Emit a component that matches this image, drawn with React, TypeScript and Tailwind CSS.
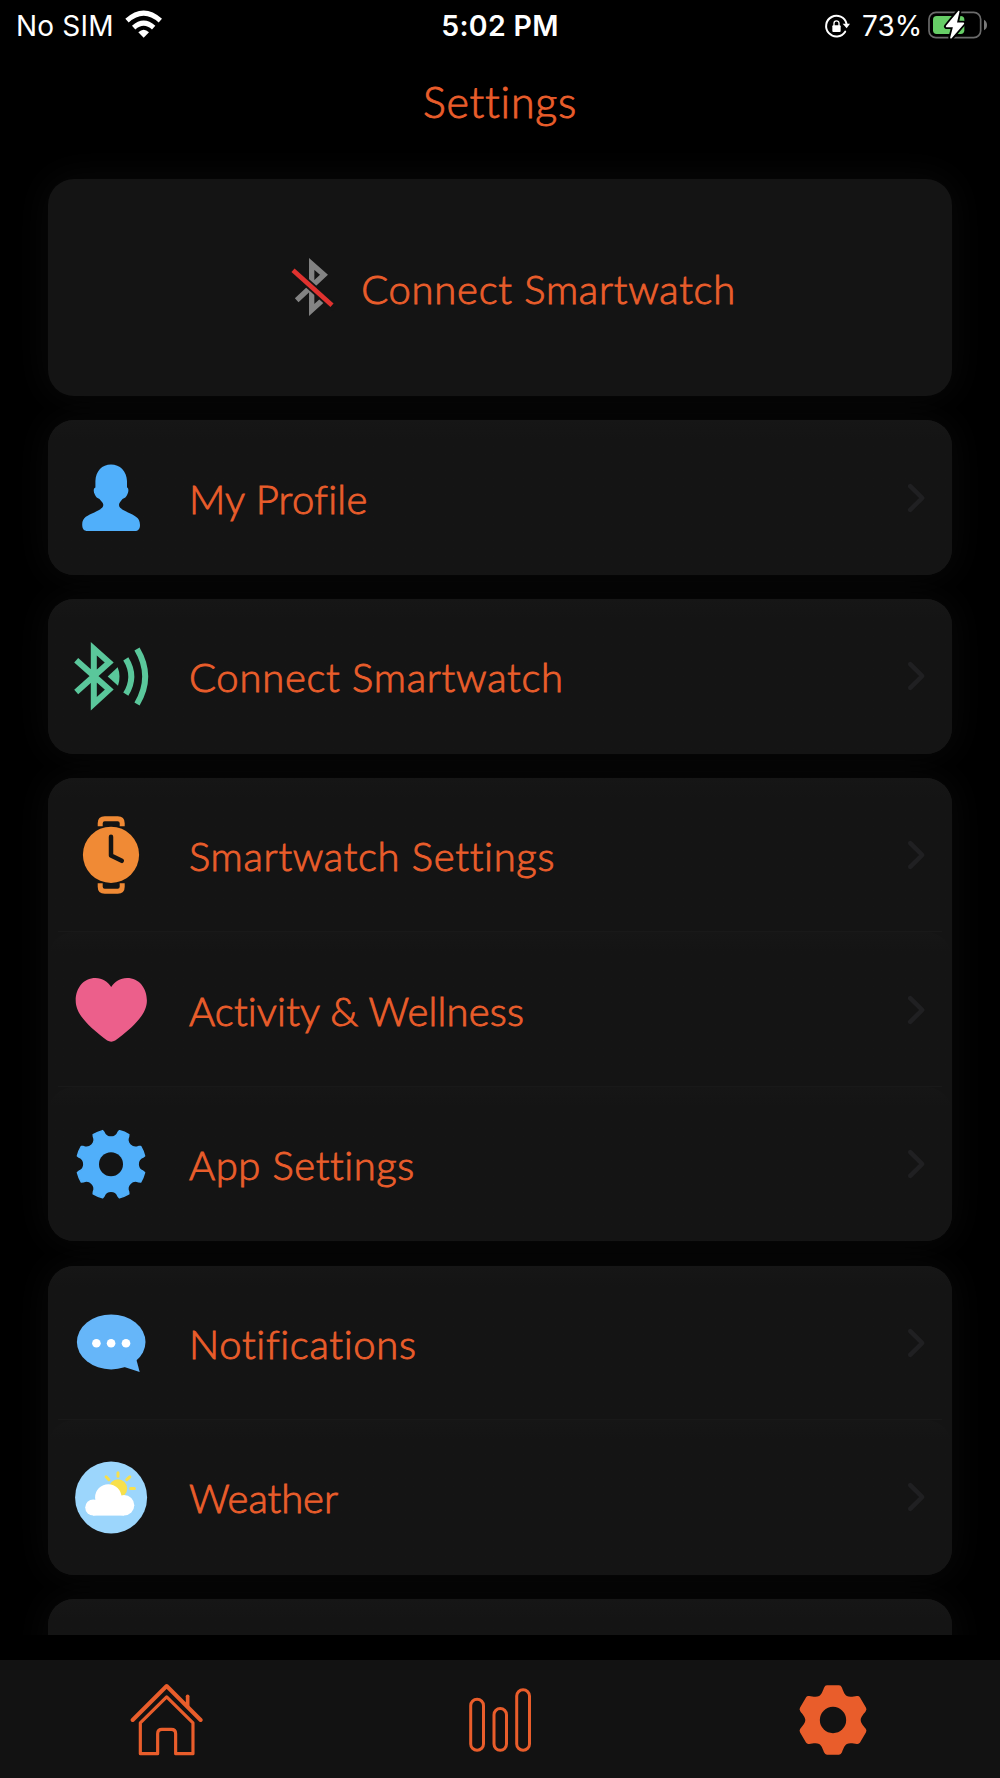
import type { ReactNode } from "react";

const ORANGE = "#e95d2b";

const polar = (cx: number, cy: number, r: number, deg: number) => {
  const a = (deg * Math.PI) / 180;
  return `${(cx + r * Math.sin(a)).toFixed(2)} ${(cy - r * Math.cos(a)).toFixed(2)}`;
};

// Eight-tooth gear: a disc with a rounded notch every 45 degrees.
const cogPath = (() => {
  let d = `M${polar(39, 39.2, 34.6, 14.5)}`;
  for (let i = 1; i <= 8; i++) {
    d += `A34.6 34.6 0 0 1 ${polar(39, 39.2, 34.6, i * 45 - 14)}`;
    d += `L${polar(39, 39.2, 32.8, i * 45 - 12.5)}`;
    d += `A7.6 7.6 0 0 0 ${polar(39, 39.2, 32.8, i * 45 + 12.5)}`;
    d += `L${polar(39, 39.2, 34.6, i * 45 + 14)}`;
  }
  return d + "Z";
})();

// Six-tooth gear: one tooth profile rotated in steps of 60 degrees.
const gearPath = (() => {
  const tooth = [
    [-41.5, -72], [-33, -77], [-30, -90], [-26.5, -97.5], [-24, -104], [-18, -104],
    [18, -104], [24, -104], [26.5, -97.5], [30, -90], [33, -77], [41.5, -72],
  ];
  let d = "";
  for (let i = 0; i < 6; i++) {
    const a = (i * Math.PI) / 3;
    const p = tooth.map(
      ([x, y]) =>
        `${(x * Math.cos(a) - y * Math.sin(a)).toFixed(1)} ${(x * Math.sin(a) + y * Math.cos(a)).toFixed(1)}`
    );
    d += `${i === 0 ? "M" : "L"}${p[0]}C${p[1]} ${p[2]} ${p[3]}Q${p[4]} ${p[5]}L${p[6]}Q${p[7]} ${p[8]}C${p[9]} ${p[10]} ${p[11]}`;
  }
  return d + "Z";
})();

function Icon({ children }: { children: ReactNode }) {
  return (
    <svg viewBox="0 0 78 78" className="size-[78px] shrink-0" fill="none">
      {children}
    </svg>
  );
}

const ProfileIcon = () => (
  <Icon>
    <path
      fill="#50affa"
      d="M39 5.4C48 5.4 54.6 12 55 22V28.5C57 29 56.6 33 55.4 35.2C54.5 38 52.5 39.2 50.5 40C48.5 43 47 43.5 47 46C47 49 51 51 56 53.5C62 56.5 68 58 68 66C68 70 66 72 63 72H15.500C12 72 10.200 70 10.200 65.500C10.200 58 16 56.500 22.300 53.500C27.300 51 31.300 49 31.300 46C31.300 43.500 29.500 43 27.500 40C25.500 39.200 23.700 38 22.700 35.200C21.400 33 21.200 29 23.400 28.500V22C23.800 12 30 5.400 39 5.400Z"
    />
  </Icon>
);

const BluetoothSignalIcon = () => (
  <Icon>
    <g stroke="#5ac79b" strokeWidth="6">
      <path d="M4.200 23.200L37.200 52.600L21.800 66.600V11.800L37.200 25.600L4.200 55" />
      <path d="M53.800 21.800Q64.800 39.500 53.800 57.200" />
      <path d="M65 12Q81.400 39.500 65 67" />
    </g>
    <path fill="#5ac79b" d="M35.700 39.500L45.700 30.300Q49.200 39.500 46 48.700Z" />
  </Icon>
);

const WatchIcon = () => (
  <Icon>
    <circle cx="39" cy="38.800" r="28.100" fill="#f08a35" />
    <path stroke="#141414" strokeWidth="4.500" strokeLinecap="round" strokeLinejoin="round" d="M39 20.800V39.400L49.800 44.800" />
    <g stroke="#f08a35" strokeWidth="5">
      <path d="M28.200 10.300V7.200Q28.200 2.700 32.700 2.700H45.700Q50.200 2.700 50.200 7.200V10.300" />
      <path d="M28.200 67.300V70.800Q28.200 75.300 32.700 75.300H45.700Q50.200 75.300 50.200 70.800V67.300" />
    </g>
  </Icon>
);

const HeartIcon = () => (
  <Icon>
    <path
      fill="#ec5f8b"
      d="M39.200 16C43 10.500 48 7 55 7C67 7 74.900 17 74.900 29.500C74.900 40.500 67 49 59 56.700C53 62.100 47.500 66.500 43.200 69.500Q39.200 71.800 35.200 69.500C31 66.500 25.500 62.100 19.500 56.700C11.500 49 3.700 40.500 3.700 29.500C3.700 17 11.500 7 23.500 7C30.500 7 35.500 10.500 39.200 16Z"
    />
  </Icon>
);

const CogIcon = () => (
  <Icon>
    <path d={cogPath} fill="#50affa" stroke="#50affa" strokeWidth="1.500" strokeLinejoin="round" />
    <circle cx="39" cy="39.200" r="12" fill="#141414" />
  </Icon>
);

const BubbleIcon = () => (
  <Icon>
    <ellipse cx="39.200" cy="37.900" rx="34.300" ry="27.500" fill="#66b6f9" />
    <path fill="#66b6f9" d="M64.500 56L67.700 68L50 62.300L56 50Z" />
    <g fill="#fff">
      <circle cx="24.400" cy="39.200" r="4.300" />
      <circle cx="39.100" cy="39.200" r="4.300" />
      <circle cx="54" cy="39.200" r="4.300" />
    </g>
  </Icon>
);

const WeatherIcon = () => (
  <Icon>
    <circle cx="39.100" cy="39.400" r="36" fill="#9cd6fc" />
    <circle cx="46" cy="30.500" r="9.200" fill="#f8e04b" />
    <path stroke="#f8e04b" strokeWidth="3" strokeLinecap="round" d="M46 14.700V18.200M58.600 30.600H62.400M34.100 18.800L36.900 21.700M57.800 18.800L54.800 21.700" />
    <g fill="#fff">
      <circle cx="36.300" cy="39.400" r="13.200" />
      <circle cx="21.300" cy="49.500" r="8.100" />
      <circle cx="52" cy="47.300" r="10.300" />
      <path d="M21 43H52V57.600H21Z" />
    </g>
  </Icon>
);

const Chevron = () => (
  <svg width="22" height="34" viewBox="0 0 22 34" className="mr-[24px] ml-auto shrink-0" fill="none">
    <path d="M4.200 5.200L16.200 17L4.200 28.800" stroke="#202022" strokeWidth="4.500" strokeLinecap="round" strokeLinejoin="round" />
  </svg>
);

function Row({ icon, children }: { icon: ReactNode; children: ReactNode }) {
  return (
    <div className="flex h-[154.500px] items-center rounded-[26px] bg-linear-to-b from-[#161616] to-[#141414] to-[20px] pl-[23.600px]">
      {icon}
      <span className="ml-[39px] pt-[2px] text-[40px] leading-none whitespace-nowrap">{children}</span>
      <Chevron />
    </div>
  );
}

const Divider = () => <div className="mx-[10px] -mt-px h-px bg-[#191919]" />;

function Card({ children }: { children: ReactNode }) {
  return (
    <section className="shrink-0 rounded-[26px] bg-[#141414] shadow-[0_0_36px_4px_rgba(255,255,255,0.035)]">{children}</section>
  );
}

function StatusBar() {
  return (
    <div className="grid h-[50px] shrink-0 grid-cols-[1fr_auto_1fr] items-center pt-px font-['Inter',sans-serif] text-[28px] leading-none font-normal text-white">
      <div className="flex items-center pl-4">
        <span className="w-[97px] tracking-[0.200px] whitespace-nowrap">No SIM</span>
        <svg width="38" height="28" viewBox="374 28 114 84" className="ml-[11.500px] -mt-1" fill="none">
          <path stroke="#fff" strokeWidth="15" d="M380 60Q430 15 480 60" />
          <path stroke="#fff" strokeWidth="15" d="M400 81Q430 54 460 81" />
          <path fill="#fff" d="M414 95Q430 80 446 95L430 111Z" />
        </svg>
      </div>
      <span className="pt-px text-[28.500px] font-semibold tracking-[0.300px]">5:02 PM</span>
      <div className="flex items-center justify-end pr-[11px]">
        <svg width="27" height="26" viewBox="970 38 81 78" fill="none">
          <path d="M1033.500 94A31 31 0 1 1 1037.500 70" stroke="#fff" strokeWidth="6" strokeLinecap="round" />
          <path d="M1026 70H1048L1038 84Z" fill="#fff" />
          <rect x="995" y="75" width="25" height="20" rx="3" fill="#fff" />
          <path d="M1000 77V69A7.500 7.500 0 0 1 1015 69V77" stroke="#fff" strokeWidth="4" />
        </svg>
        <span className="ml-[11px] w-[65px] whitespace-nowrap">73%</span>
        <svg width="62" height="32" viewBox="1281 25 186 96" className="-mt-0.5" fill="none">
          <rect x="1287" y="35" width="155" height="76" rx="21" stroke="#6b6b6b" strokeWidth="5" />
          <path d="M1452 57Q1461 62 1461 73Q1461 84 1452 89Z" fill="#7a7a7a" />
          <rect x="1299" y="46" width="94" height="54" rx="11" fill="#67ce67" />
          <path d="M1376 33L1340 77H1362L1353 111L1390 68H1368Z" fill="#fff" stroke="#000" strokeWidth="16" strokeLinejoin="round" />
          <path d="M1376 33L1340 77H1362L1353 111L1390 68H1368Z" fill="#fff" stroke="#fff" strokeWidth="5" strokeLinejoin="round" />
        </svg>
      </div>
    </div>
  );
}

function TabBar() {
  return (
    <nav className="grid h-[118px] shrink-0 grid-cols-3 items-center justify-items-center bg-[#121212] pt-0.5">
      <svg width="73.300" height="73.300" viewBox="390 160 220 220" fill="none" stroke={ORANGE} strokeLinecap="round" strokeLinejoin="round">
        <path d="M398 271L500 169L602 271" strokeWidth="12" />
        <path d="M563 200V230" strokeWidth="11" />
        <path d="M421 280L500 202L579 280V372H527V312Q527 299 514 299H486Q473 299 473 312V372H421Z" strokeWidth="9.500" />
      </svg>
      <svg width="62" height="64" viewBox="0 0 62 64" fill="none" stroke={ORANGE} strokeWidth="3">
        <rect x="1.700" y="11.300" width="12.800" height="51" rx="6.400" />
        <rect x="25" y="20.500" width="12.500" height="41.800" rx="6.200" />
        <rect x="47.700" y="1.700" width="12.800" height="60.600" rx="6.400" />
      </svg>
      <svg width="70" height="70" viewBox="-105 -105 210 210">
        <path d={gearPath} fill={ORANGE} />
        <circle r="39.500" fill="#121212" />
      </svg>
    </nav>
  );
}

export default function App() {
  return (
    <div className="flex h-[1778px] w-[1000px] flex-col overflow-hidden bg-black font-['Lato',sans-serif] font-light text-[#e95d2b] [-webkit-text-stroke-color:#e95d2b]">
      <StatusBar />
      <header className="flex h-[103px] shrink-0 items-start justify-center pt-[28.500px]">
        <h1 className="text-[43px] leading-[46px] tracking-[0.750px] [-webkit-text-stroke-width:0.900px]">Settings</h1>
      </header>
      <main className="flex h-[1482px] shrink-0 flex-col gap-[24.200px] overflow-hidden px-[48.400px] pt-[26px] [-webkit-text-stroke-width:0.900px]">
        <Card>
          <div className="flex h-[217.300px] items-center pl-[241.600px]">
            <svg width="46.700" height="63.300" viewBox="60 50 140 190" fill="none">
              <path d="M80 183L162 106.500L125 74V212L158 182" stroke="#838383" strokeWidth="16" />
              <path d="M60 85L195 206" stroke="#141414" strokeWidth="25" />
              <path d="M69 93L186 198" stroke="#e0322f" strokeWidth="14" />
            </svg>
            <span className="ml-[24.500px] pt-[3px] text-[40px] leading-none tracking-[0.730px] whitespace-nowrap">Connect Smartwatch</span>
          </div>
        </Card>
        <Card>
          <Row icon={<ProfileIcon />}><span className="tracking-[0.300px]">My Profile</span></Row>
        </Card>
        <Card>
          <Row icon={<BluetoothSignalIcon />}><span className="tracking-[0.730px]">Connect Smartwatch</span></Row>
        </Card>
        <Card>
          <Row icon={<WatchIcon />}><span className="tracking-[0.700px]">Smartwatch Settings</span></Row>
          <Divider />
          <Row icon={<HeartIcon />}><span className="tracking-[0.180px]">Activity &amp; Wellness</span></Row>
          <Divider />
          <Row icon={<CogIcon />}><span className="tracking-[0.600px]">App Settings</span></Row>
        </Card>
        <Card>
          <Row icon={<BubbleIcon />}><span className="tracking-[0.700px]">Notifications</span></Row>
          <Divider />
          <Row icon={<WeatherIcon />}><span className="tracking-[-0.050px]">Weather</span></Row>
        </Card>
        <Card>
          <div className="h-[154.500px] rounded-[26px] bg-linear-to-b from-[#161616] to-[#141414] to-[20px]" />
        </Card>
      </main>
      <div className="h-[25px] shrink-0" />
      <TabBar />
    </div>
  );
}
